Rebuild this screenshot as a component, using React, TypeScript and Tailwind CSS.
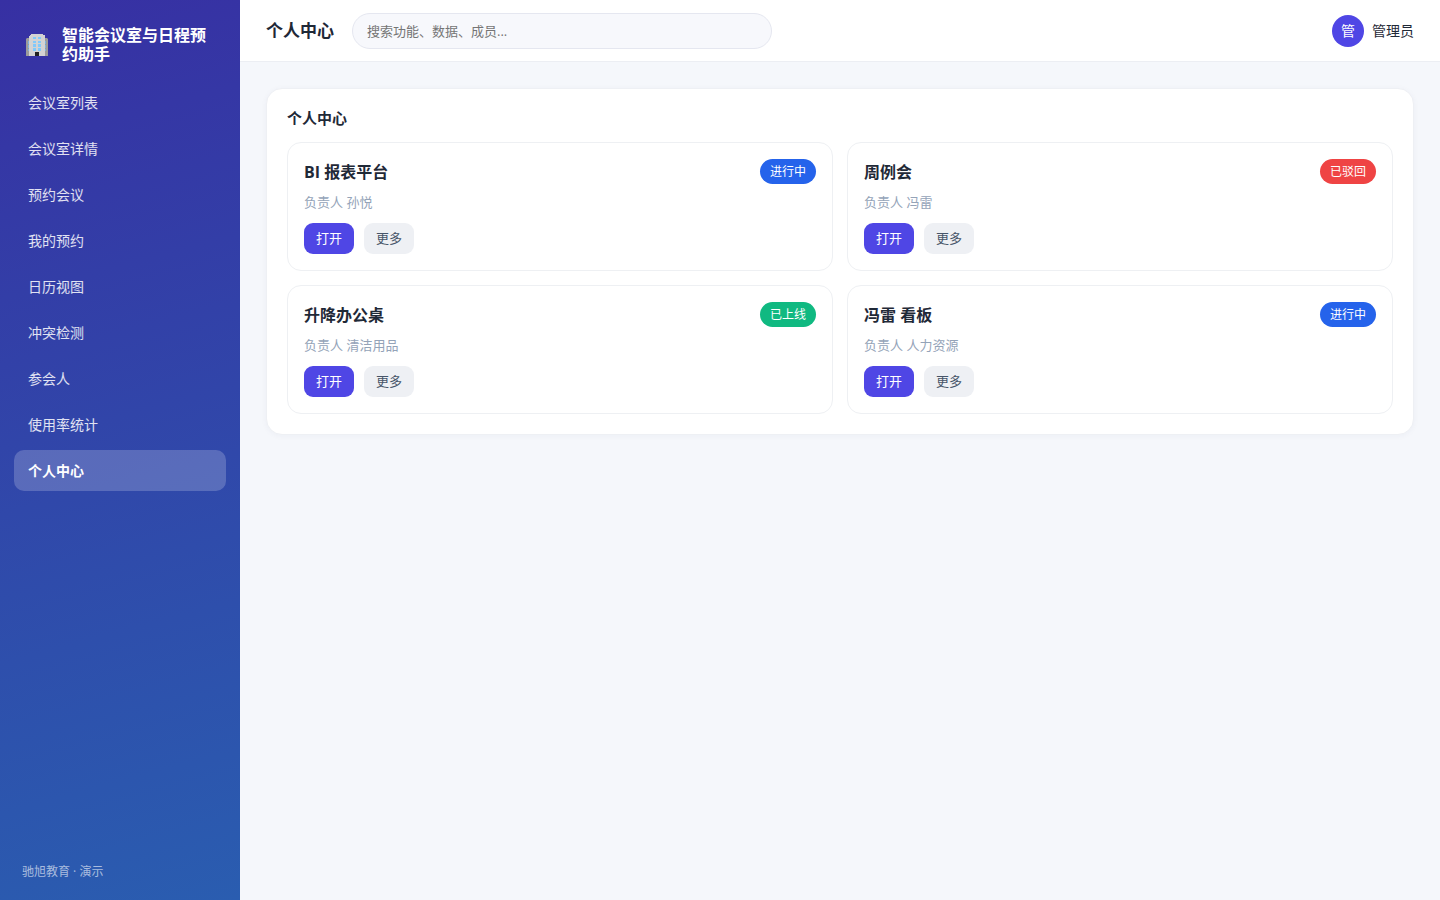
const navItems = [
  '会议室列表',
  '会议室详情',
  '预约会议',
  '我的预约',
  '日历视图',
  '冲突检测',
  '参会人',
  '使用率统计',
  '个人中心',
];

const activeItem = '个人中心';

type Project = { title: string; owner: string; status: string; tone: string };

const projects: Project[] = [
  { title: 'BI 报表平台', owner: '孙悦', status: '进行中', tone: 'bg-[#2563eb]' },
  { title: '周例会', owner: '冯雷', status: '已驳回', tone: 'bg-[#ef4444]' },
  { title: '升降办公桌', owner: '清洁用品', status: '已上线', tone: 'bg-[#10b981]' },
  { title: '冯雷 看板', owner: '人力资源', status: '进行中', tone: 'bg-[#2563eb]' },
];

function BuildingIcon() {
  return (
    <svg viewBox="0 0 22 22" className="size-[22px] shrink-0" aria-hidden="true">
      <path d="M0 5l1-1h20l1 1v17H0z" fill="#9b9b9b" />
      <path d="M3 2h1V1h1V0h12v1h2v1h0v20H3z" fill="#d3d3d3" />
      <path
        d="M7 3h3v2H7zM12 3h3v2h-3zM7 7h3v2H7zM12 7h3v2h-3zM7 10h3v3H7zM12 10h3v3h-3zM7 14h3v3H7zM12 14h3v3h-3z"
        fill="#81c9fb"
      />
      <path
        d="M2 7h1v3H2zM2 11h1v3H2zM2 15h1v2H2zM19 7h1v3h-1zM19 11h1v3h-1zM19 15h1v2h-1z"
        fill="#7fb2da"
      />
      <path d="M9 18h4v4H9z" fill="#212121" />
    </svg>
  );
}

function Sidebar() {
  return (
    <aside className="flex w-60 shrink-0 flex-col bg-[linear-gradient(165deg,#3730a3,#2a5db0)] px-3.5 text-white">
      <div className="flex items-center gap-3.5 px-3 pt-[26px] pb-[18px]">
        <BuildingIcon />
        <div className="text-base leading-[19px] font-bold">智能会议室与日程预约助手</div>
      </div>
      <nav className="flex flex-col gap-[5px]">
        {navItems.map((item) => (
          <a
            key={item}
            href="#"
            aria-current={item === activeItem ? 'page' : undefined}
            className={
              item === activeItem
                ? 'rounded-[10px] bg-white/20 px-3.5 py-[11px] text-sm leading-[19px] font-semibold text-white'
                : 'rounded-[10px] px-3.5 py-[11px] text-sm leading-[19px] text-white/85'
            }
          >
            {item}
          </a>
        ))}
      </nav>
      <div className="mt-auto px-2 pb-5 text-xs leading-4 text-white/60">驰旭教育 · 演示</div>
    </aside>
  );
}

function Header() {
  return (
    <header className="flex h-[62px] items-center gap-[18px] border-b border-[#eceef3] bg-white px-[26px]">
      <h1 className="text-[17px] leading-6 font-bold">个人中心</h1>
      <input
        type="search"
        aria-label="搜索"
        placeholder="搜索功能、数据、成员..."
        className="h-9 w-[420px] rounded-full border border-[#e5e7f0] bg-[#f7f8fc] px-3.5 text-[13px] outline-none placeholder:text-[#757575]"
      />
      <div className="ml-auto flex items-center gap-2 text-sm">
        <span className="flex size-8 items-center justify-center rounded-full bg-[#4f46e5] text-white">管</span>
        <span>管理员</span>
      </div>
    </header>
  );
}

function ProjectCard({ title, owner, status, tone }: Project) {
  return (
    <article className="rounded-[14px] border border-[#eef0f3] p-4">
      <div className="flex items-center justify-between">
        <h3 className="text-base leading-[22px] font-bold">{title}</h3>
        <span className={`rounded-full px-2.5 py-1 text-xs leading-[17px] text-white ${tone}`}>{status}</span>
      </div>
      <p className="mt-[9px] text-[13px] leading-[18px] text-[#94a3b8]">负责人 {owner}</p>
      <div className="mt-3 flex gap-2.5">
        <button type="button" className="rounded-[9px] bg-[#4f46e5] px-3 py-1.5 text-[13px] leading-[19px] text-white">
          打开
        </button>
        <button type="button" className="rounded-[9px] bg-[#eef0f4] px-3 py-1.5 text-[13px] leading-[19px] text-[#475569]">
          更多
        </button>
      </div>
    </article>
  );
}

export default function App() {
  return (
    <div className="flex min-h-screen bg-[#f5f7fb] font-['Open_Sans','Noto_Sans_CJK_SC',sans-serif] text-[#1f2937]">
      <Sidebar />
      <div className="flex min-w-0 flex-1 flex-col">
        <Header />
        <main className="p-[26px]">
          <section className="rounded-2xl border border-[#eef0f4] bg-white p-5 shadow-[0_1px_6px_rgba(30,41,90,0.04)]">
            <h2 className="mb-[15px] text-[15px] leading-[18px] font-bold">个人中心</h2>
            <div className="grid grid-cols-2 gap-3.5">
              {projects.map((project) => (
                <ProjectCard key={project.title} {...project} />
              ))}
            </div>
          </section>
        </main>
      </div>
    </div>
  );
}
